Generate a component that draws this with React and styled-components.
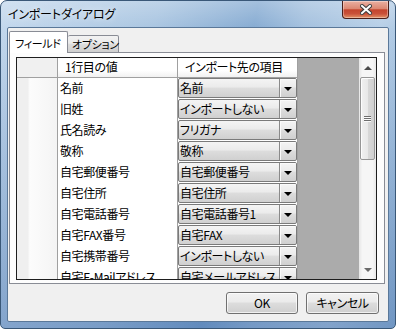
import styled, { createGlobalStyle } from 'styled-components';

const GlobalStyle = createGlobalStyle`
  html, body {
    margin: 0;
    padding: 0;
    background: #ffffff;
  }
  body {
    font-family: "Noto Sans CJK JP", "Noto Sans", sans-serif;
    font-size: 12px;
    font-feature-settings: "palt";
    letter-spacing: -0.4px;
    color: #000;
  }
`;

const Window = styled.div`
  width: 396px;
  height: 329px;
  box-sizing: border-box;
  border: 1px solid #3a5878;
  border-radius: 7px 7px 5px 5px;
  padding: 0 6px 6px 6px;
  display: flex;
  flex-direction: column;
  background:
    linear-gradient(180deg, rgba(255, 255, 255, 0.25) 0, rgba(255, 255, 255, 0) 28px, rgba(30, 80, 150, 0.35) 100%),
    linear-gradient(100deg, #c3d8ed 0%, #a9c5e1 35%, #86abd2 57%, #a3c0de 68%, #b7cfe7 85%, #9dbcdb 100%);
`;

const TitleBar = styled.div`
  height: 26px;
  display: flex;
  justify-content: space-between;
  align-items: flex-start;
  padding-left: 1px;
`;

const Title = styled.div`
  padding-top: 5px;
  line-height: 16px;
  font-size: 12px;
  letter-spacing: -0.2px;
  color: #000;
  text-shadow: 0 0 6px rgba(255, 255, 255, 0.9);
`;

const CloseButton = styled.div`
  width: 47px;
  height: 18px;
  box-sizing: border-box;
  border: 1px solid #4a1f1a;
  border-top: none;
  border-radius: 0 0 4px 4px;
  display: flex;
  align-items: center;
  justify-content: center;
  background: linear-gradient(180deg, #eab0a2 0%, #dc8873 45%, #c4452d 52%, #c9513a 75%, #e39266 100%);
  box-shadow: inset 0 0 0 1px rgba(255, 255, 255, 0.35);
`;

const Client = styled.div`
  flex: 1;
  background: #f0f0f0;
  border: 1px solid #5a7899;
  border-radius: 2px;
  display: flex;
  flex-direction: column;
  padding: 3px 3px 0 1px;
`;

const TabStrip = styled.div`
  height: 22px;
  display: flex;
  align-items: flex-end;
  margin-bottom: -1px;
  position: relative;
  z-index: 1;
`;

const Tab = styled.div`
  box-sizing: border-box;
  width: ${(p) => p.$width}px;
  height: ${(p) => (p.$active ? 22 : 18)}px;
  border: 1px solid #898c95;
  border-bottom: ${(p) => (p.$active ? 'none' : '1px solid #898c95')};
  border-left: ${(p) => (p.$first ? '1px solid #898c95' : 'none')};
  border-radius: 2px 2px 0 0;
  background: ${(p) =>
    p.$active
      ? '#ffffff'
      : 'linear-gradient(180deg, #f2f2f2 0%, #ebebeb 45%, #dddddd 50%, #cfcfcf 100%)'};
  padding: ${(p) => (p.$active ? '3px 0 0 5px' : '0 0 0 4px')};
  font-size: 11px;
  letter-spacing: -0.3px;
  line-height: 16px;
  white-space: nowrap;
`;

const Panel = styled.div`
  height: 232px;
  box-sizing: border-box;
  border: 1px solid #898c95;
  background: #fdfdfd;
  padding: 4px 7px 3px 6px;
  display: flex;
`;

const GridControl = styled.div`
  flex: 1;
  border: 1px solid #1e1e1e;
  display: flex;
  overflow: hidden;
`;

const GridBody = styled.div`
  flex: 1;
  background: #ababab;
  overflow: hidden;
`;

const Row = styled.div`
  display: grid;
  grid-template-columns: 41px 120px 120px;
  height: ${(p) => (p.$header ? 20 : 21)}px;
`;

const RowHead = styled.div`
  box-sizing: border-box;
  border-right: 1px solid #a0a0a0;
  border-bottom: 1px solid #a0a0a0;
  background: ${(p) =>
    p.$header
      ? '#f0f0f0'
      : 'linear-gradient(90deg, #efefef 0%, #efefef 27%, #fcfcfc 32%, #f4f4f4 100%)'};
`;

const HeadCell = styled.div`
  box-sizing: border-box;
  border-right: 1px solid #a0a0a0;
  border-bottom: 1px solid #a0a0a0;
  background: linear-gradient(180deg, #ffffff 0%, #ffffff 65%, #f1f1f1 100%);
  padding-left: 7px;
  line-height: 18px;
  white-space: nowrap;
  overflow: hidden;
`;

const Cell = styled.div`
  box-sizing: border-box;
  border-right: 1px solid #a0a0a0;
  border-bottom: 1px solid #a0a0a0;
  background: #ffffff;
  padding-left: 2px;
  line-height: 19px;
  white-space: nowrap;
  overflow: hidden;
`;

const ComboCell = styled.div`
  box-sizing: border-box;
  border-right: 1px solid #a0a0a0;
  border-bottom: 1px solid #a0a0a0;
  background: #ffffff;
  padding: 0 0 1px 0;
  display: flex;
`;

const Combo = styled.div`
  flex: 1;
  display: flex;
  box-sizing: border-box;
  border: 1px solid #7a7a7a;
  border-radius: 2px;
  background: linear-gradient(180deg, #f4f4f4 0%, #ebebeb 45%, #dddddd 50%, #d0d0d0 100%);
  overflow: hidden;
`;

const ComboText = styled.div`
  flex: 1;
  padding-left: 1px;
  line-height: 18px;
  white-space: nowrap;
  overflow: hidden;
  border-right: 1px solid #8a8a8a;
`;

const ComboButton = styled.div`
  width: 16px;
  display: flex;
  align-items: center;
  justify-content: center;
  box-shadow: inset 1px 1px 0 #fafafa;
`;

const Arrow = styled.div`
  width: 0;
  height: 0;
  border-left: 4px solid transparent;
  border-right: 4px solid transparent;
  border-top: 4px solid #000;
  margin-top: 1px;
`;

const ScrollBar = styled.div`
  width: 17px;
  display: flex;
  flex-direction: column;
  align-items: center;
  background: linear-gradient(90deg, #e6e6e6 0%, #f6f6f6 20%, #f6f6f6 80%, #e9e9e9 100%);
`;

const ScrollArrow = styled.div`
  height: 19px;
  display: flex;
  align-items: center;
  justify-content: center;
`;

const ArrowGlyph = styled.div`
  width: 0;
  height: 0;
  border-left: 4px solid transparent;
  border-right: 4px solid transparent;
  ${(p) => (p.$down ? 'border-top: 4px solid #6a6a6a;' : 'border-bottom: 4px solid #4a4a4a;')}
`;

const Thumb = styled.div`
  width: 15px;
  height: 83px;
  box-sizing: border-box;
  border: 1px solid #979797;
  border-radius: 2px;
  background: linear-gradient(90deg, #f1f1f1 0%, #e9e9e9 50%, #d9d9d9 51%, #d0d0d0 100%);
  box-shadow: inset 1px 1px 0 #fdfdfd;
  display: flex;
  flex-direction: column;
  align-items: center;
  justify-content: center;
  gap: 1px;
`;

const Grip = styled.div`
  width: 7px;
  height: 1px;
  background: #6e6e6e;
  box-shadow: 0 1px 0 #fafafa;
`;

const Track = styled.div`
  flex: 1;
`;

const ButtonRow = styled.div`
  display: flex;
  justify-content: flex-end;
  gap: 8px;
  padding: 8px 6px 7px 0;
`;

const Button = styled.div`
  width: ${(p) => p.$width}px;
  height: 22px;
  box-sizing: border-box;
  border: 1px solid #707070;
  border-radius: 3px;
  background: linear-gradient(180deg, #f2f2f2 0%, #ebebeb 45%, #dddddd 50%, #cfcfcf 100%);
  box-shadow: inset 0 0 0 1px rgba(255, 255, 255, 0.7);
  display: flex;
  align-items: center;
  justify-content: center;
  line-height: 16px;
`;

const rows = [
  ['名前', '名前'],
  ['旧姓', 'インポートしない'],
  ['氏名読み', 'フリガナ'],
  ['敬称', '敬称'],
  ['自宅郵便番号', '自宅郵便番号'],
  ['自宅住所', '自宅住所'],
  ['自宅電話番号', '自宅電話番号1'],
  ['自宅FAX番号', '自宅FAX'],
  ['自宅携帯番号', 'インポートしない'],
  ['自宅E-Mailアドレス', '自宅メールアドレス'],
];

const App = () => {
  return (
    <>
      <GlobalStyle />
      <Window>
        <TitleBar>
          <Title>インポートダイアログ</Title>
          <CloseButton>
            <svg width="12" height="11" viewBox="0 0 12 11">
              <path d="M2 2 L10 9 M10 2 L2 9" stroke="#3b3b3b" strokeWidth="4" strokeLinecap="square" />
              <path d="M2 2 L10 9 M10 2 L2 9" stroke="#ffffff" strokeWidth="2" strokeLinecap="square" />
            </svg>
          </CloseButton>
        </TitleBar>
        <Client>
          <TabStrip>
            <Tab $active $first $width={59}>フィールド</Tab>
            <Tab $width={51}>オプション</Tab>
          </TabStrip>
          <Panel>
            <GridControl>
              <GridBody>
                <Row $header>
                  <RowHead $header />
                  <HeadCell>1行目の値</HeadCell>
                  <HeadCell>インポート先の項目</HeadCell>
                </Row>
                {rows.map(([src, dst], i) => (
                  <Row key={i}>
                    <RowHead />
                    <Cell>{src}</Cell>
                    <ComboCell>
                      <Combo>
                        <ComboText>{dst}</ComboText>
                        <ComboButton>
                          <Arrow />
                        </ComboButton>
                      </Combo>
                    </ComboCell>
                  </Row>
                ))}
              </GridBody>
              <ScrollBar>
                <ScrollArrow>
                  <ArrowGlyph />
                </ScrollArrow>
                <Thumb>
                  <Grip />
                  <Grip />
                  <Grip />
                </Thumb>
                <Track />
                <ScrollArrow>
                  <ArrowGlyph $down />
                </ScrollArrow>
              </ScrollBar>
            </GridControl>
          </Panel>
          <ButtonRow>
            <Button $width={72}>OK</Button>
            <Button $width={73}>キャンセル</Button>
          </ButtonRow>
        </Client>
      </Window>
    </>
  );
};

export default App;
